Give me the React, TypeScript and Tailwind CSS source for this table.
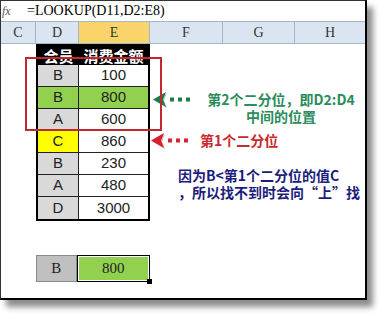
const rows = [
  { k: 'B', v: '100', d: 'bg-[#d9d9d9]', e: 'bg-white' },
  { k: 'B', v: '800', d: 'bg-[#92d050]', e: 'bg-[#92d050]' },
  { k: 'A', v: '600', d: 'bg-[#d9d9d9]', e: 'bg-white' },
  { k: 'C', v: '860', d: 'bg-[#ffff00]', e: 'bg-white' },
  { k: 'B', v: '230', d: 'bg-[#d9d9d9]', e: 'bg-white' },
  { k: 'A', v: '480', d: 'bg-[#d9d9d9]', e: 'bg-white' },
  { k: 'D', v: '3000', d: 'bg-[#d9d9d9]', e: 'bg-white' },
];

const cols = [
  { name: 'C', w: 'w-[35px]', bg: '' },
  { name: 'D', w: 'w-[43px]', bg: '' },
  { name: 'E', w: 'w-[71px]', bg: 'bg-[#f8d46a]' },
  { name: 'F', w: 'w-[73px]', bg: '' },
  { name: 'G', w: 'w-[72px]', bg: '' },
  { name: 'H', w: 'flex-1', bg: '' },
];

function DotArrow({ color }: { color: string }) {
  return (
    <svg width="45" height="17" viewBox="0 0 45 17" className="shrink-0">
      <polygon points="1,8.5 14,1 11,8.5 14,16" fill={color} opacity="0.35" transform="translate(1,1)" />
      <polygon points="1,8.5 14,1 11,8.5 14,16" fill={color} />
      <rect x="18" y="6.5" width="4" height="4" fill={color} />
      <rect x="26" y="6.5" width="4" height="4" fill={color} />
      <rect x="34" y="6.5" width="4" height="4" fill={color} />
    </svg>
  );
}

export default function App() {
  return (
    <div className="w-[387px] h-[321px] bg-white overflow-hidden">
      <div className="w-[367px] h-[300px] flex flex-col border-l border-t border-[#333] border-r-2 border-b-2 border-r-black border-b-black bg-white shadow-[6px_7px_6px_rgba(0,0,0,0.45)]">
        {/* formula bar */}
        <div className="h-[20px] flex items-center">
          <span className="w-[14px] text-[12px] italic text-[#555] font-['Liberation_Serif',serif] leading-none pl-[1px]">fx</span>
          <span className="ml-[12px] text-[14px] text-black font-['Liberation_Serif',serif] leading-none">=LOOKUP(D11,D2:E8)</span>
        </div>

        {/* column letters */}
        <div className="h-[23px] flex bg-[#dbe5f1] border-y border-[#a3b6cc]">
          {cols.map((c) => (
            <div
              key={c.name}
              className={`${c.w} ${c.bg} flex items-center justify-center border-r border-[#a3b6cc] last:border-r-0 text-[14px] text-[#333] font-['Liberation_Serif',serif]`}
            >
              {c.name}
            </div>
          ))}
        </div>

        {/* sheet body */}
        <div className="relative flex-1 flex">
          <div className="w-[35px]" />

          <div className="w-[114px] flex flex-col">
            <div className="border-2 border-black">
              <div className="h-[19px] flex bg-black text-white font-bold text-[15px] font-['Noto_Sans_CJK_SC',sans-serif] leading-none">
                <div className="w-[41px] flex items-center justify-center">会员</div>
                <div className="flex-1 flex items-center justify-center">消费金额</div>
              </div>
              {rows.map((r, i) => (
                <div
                  key={i}
                  className={`h-[22px] flex text-[15px] text-[#222] font-['Liberation_Sans',sans-serif] ${i < rows.length - 1 ? 'border-b border-[#222]' : ''}`}
                >
                  <div className={`w-[41px] ${r.d} flex items-center justify-center border-r border-[#222]`}>{r.k}</div>
                  <div className={`flex-1 ${r.e} flex items-center justify-center`}>{r.v}</div>
                </div>
              ))}
            </div>

            <div className="mt-[34px] h-[27px] flex text-[15px] text-[#222] font-['Liberation_Serif',serif]">
              <div className="w-[41px] bg-[#c0c0c0] border border-[#8a8a8a] flex items-center justify-center">B</div>
              <div className="relative w-[74px] bg-[#92d050] border border-black shadow-[inset_0_0_0_1px_white] flex items-center justify-center">
                800
                <div className="absolute -right-[3px] -bottom-[3px] w-[5px] h-[5px] bg-black" />
              </div>
            </div>
          </div>

          <div className="flex-1 flex flex-col pt-[47px] font-['Noto_Sans_CJK_SC',sans-serif] font-bold text-[14px] leading-[17px] whitespace-nowrap">
            <div className="flex items-start">
              <div className="ml-[2px]">
                <DotArrow color="#1f7a4c" />
              </div>
              <div className="ml-[6px] w-[156px] text-center text-[#2a8c5c]">
                <div>第2个二分位，即D2:D4</div>
                <div>中间的位置</div>
              </div>
            </div>

            <div className="mt-[7px] flex items-start">
              <DotArrow color="#d4232b" />
              <div className="ml-[5px] text-[#c8282e]">第1个二分位</div>
            </div>

            <div className="mt-[18px] ml-[28px] text-[#1c1c7c]">
              <div>因为B&lt;第1个二分位的值C</div>
              <div>，所以找不到时会向“上”找</div>
            </div>
          </div>

          {/* red highlight box */}
          <div className="absolute left-[24px] top-[13px] w-[137px] h-[74px] border-2 border-[#c0282d]" />
        </div>
      </div>
    </div>
  );
}
